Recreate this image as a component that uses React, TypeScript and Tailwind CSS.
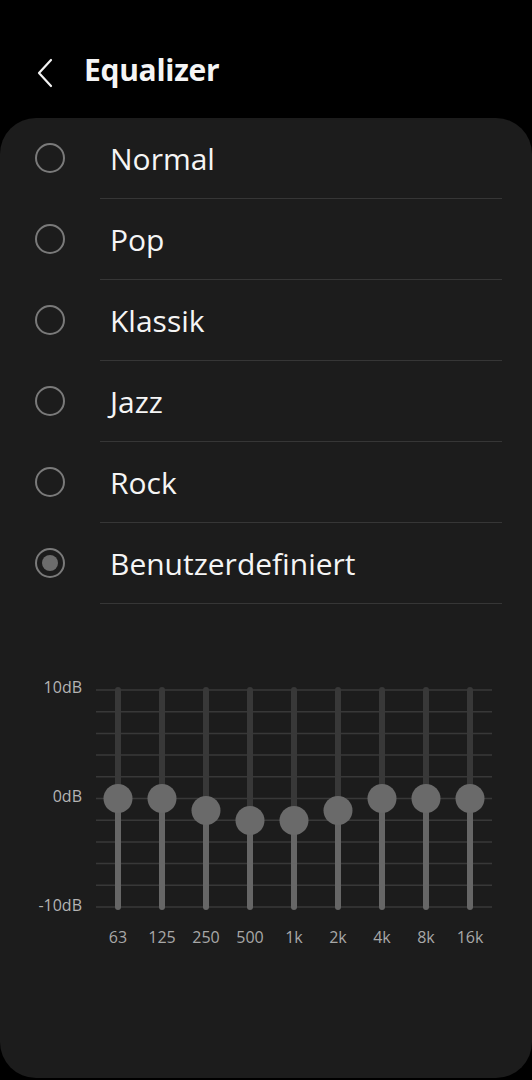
import React from 'react';

const presets = ['Normal', 'Pop', 'Klassik', 'Jazz', 'Rock', 'Benutzerdefiniert'];
const selected = 'Benutzerdefiniert';

// band label + thumb offset from the 0dB line in px (positive = down)
const bands = [
  { label: '63', offset: 0 },
  { label: '125', offset: 0 },
  { label: '250', offset: 12 },
  { label: '500', offset: 22 },
  { label: '1k', offset: 22 },
  { label: '2k', offset: 12 },
  { label: '4k', offset: 0 },
  { label: '8k', offset: 0 },
  { label: '16k', offset: 0 },
];

const TOP = 10;
const STEP = 21.7;
const ZERO = TOP + STEP * 5;
const BOTTOM = TOP + STEP * 10;

function Radio({ on }: { on: boolean }) {
  return (
    <div className="w-[30px] h-[30px] rounded-full border-2 border-[#7a7a7a] flex items-center justify-center">
      {on && <div className="w-[16px] h-[16px] rounded-full bg-[#6c6c6c]" />}
    </div>
  );
}

function Chart() {
  return (
    <svg width="396" height="240" viewBox="0 0 396 240" className="block">
      {Array.from({ length: 11 }).map((_, i) => (
        <line key={i} x1="0" x2="396" y1={TOP + STEP * i} y2={TOP + STEP * i} stroke="#383838" strokeWidth="1.5" />
      ))}
      {bands.map((b, i) => {
        const x = 22 + 44 * i;
        const y = ZERO + b.offset;
        return (
          <g key={b.label}>
            <line x1={x} x2={x} y1={TOP} y2={y} stroke="#383838" strokeWidth="6" strokeLinecap="round" />
            <line x1={x} x2={x} y1={y} y2={BOTTOM} stroke="#666666" strokeWidth="6" strokeLinecap="round" />
            <circle cx={x} cy={y} r="14.5" fill="#6a6a6a" />
          </g>
        );
      })}
    </svg>
  );
}

export default function App() {
  return (
    <div className="w-[532px] h-[1080px] bg-black flex flex-col" style={{ fontFamily: '"Open Sans", sans-serif' }}>
      <div className="h-[118px] flex items-center pl-[36px] pb-[2px]">
        <svg width="20" height="30" viewBox="0 0 20 30" className="mt-[29px]">
          <path d="M15 2 L3 15 L15 28" fill="none" stroke="#f2f2f2" strokeWidth="2.2" strokeLinecap="round" strokeLinejoin="round" />
        </svg>
        <h1 className="ml-[28px] text-[30px] font-bold text-[#f5f5f5] leading-none mt-[24px] tracking-[-0.3px]">Equalizer</h1>
      </div>

      <div className="h-[960px] bg-[#1c1c1c] rounded-[36px]">
        <ul>
          {presets.map((p) => (
            <li key={p} className="flex h-[81px]">
              <div className="w-[100px] flex items-center pl-[35px] pb-[1px]">
                <Radio on={p === selected} />
              </div>
              <div className="w-[402px] border-b border-[#363636] flex items-center pl-[10px] text-[30px] text-[#f5f5f5]">
                {p}
              </div>
            </li>
          ))}
        </ul>

        <div className="mt-[76px] flex">
          <div className="w-[82px] flex flex-col gap-[93px] items-end text-[16px] text-[#b4b4b4] leading-none mt-[-1px]">
            <span>10dB</span>
            <span>0dB</span>
            <span>-10dB</span>
          </div>
          <div className="ml-[14px]">
            <Chart />
          </div>
        </div>
        <div className="flex pl-[96px] mt-[5px]">
          {bands.map((b) => (
            <div key={b.label} className="w-[44px] text-center text-[16px] text-[#a8a8a8]">
              {b.label}
            </div>
          ))}
        </div>
      </div>
    </div>
  );
}
